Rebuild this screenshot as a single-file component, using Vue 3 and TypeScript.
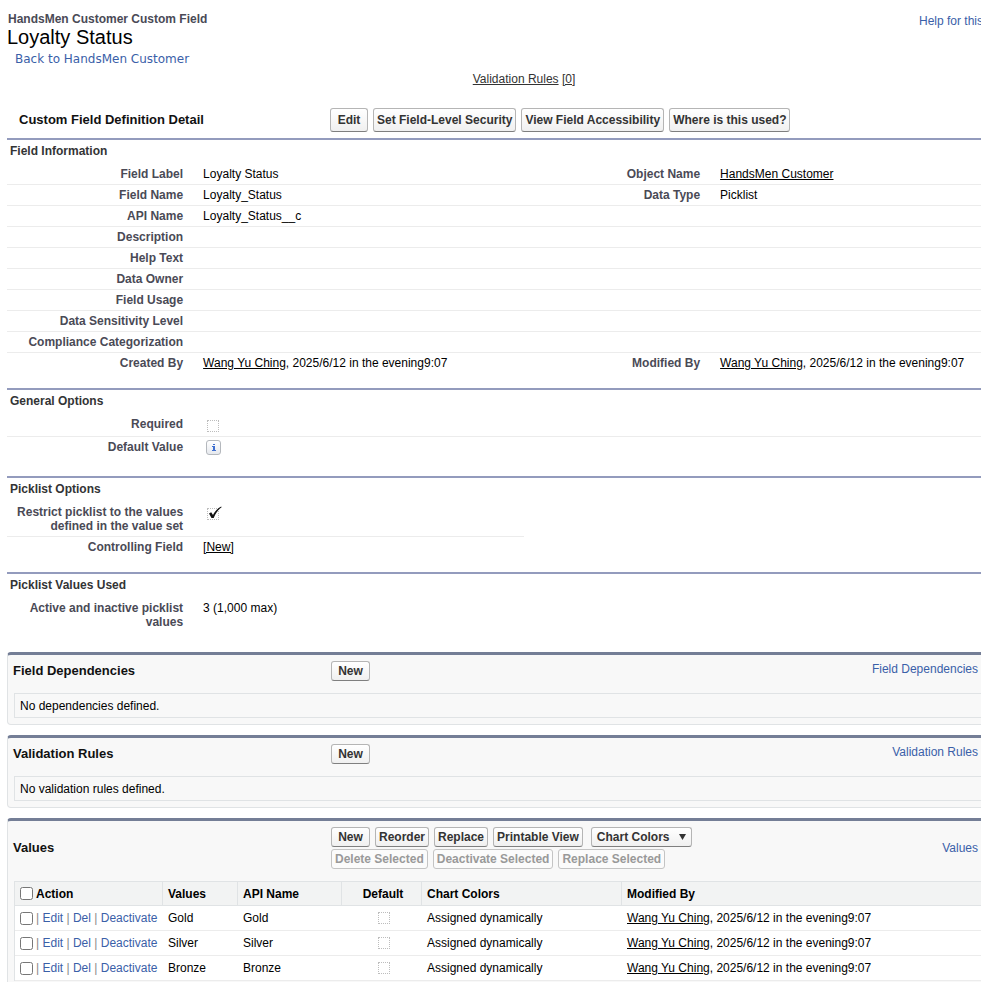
<script setup lang="ts">
import { ref } from 'vue'

interface Field {
  label: string
  text?: string
  link?: string
}

interface FieldRow {
  left: Field
  right?: Field
}

const stamp = ', 2025/6/12 in the evening9:07'
const user = 'Wang Yu Ching'

const information: FieldRow[] = [
  { left: { label: 'Field Label', text: 'Loyalty Status' }, right: { label: 'Object Name', link: 'HandsMen Customer' } },
  { left: { label: 'Field Name', text: 'Loyalty_Status' }, right: { label: 'Data Type', text: 'Picklist' } },
  { left: { label: 'API Name', text: 'Loyalty_Status__c' } },
  { left: { label: 'Description' } },
  { left: { label: 'Help Text' } },
  { left: { label: 'Data Owner' } },
  { left: { label: 'Field Usage' } },
  { left: { label: 'Data Sensitivity Level' } },
  { left: { label: 'Compliance Categorization' } },
  { left: { label: 'Created By', link: user, text: stamp }, right: { label: 'Modified By', link: user, text: stamp } },
]

const detailActions = ['Edit', 'Set Field-Level Security', 'View Field Accessibility', 'Where is this used?']
const valueActions = ['New', 'Reorder', 'Replace', 'Printable View']
const bulkActions = ['Delete Selected', 'Deactivate Selected', 'Replace Selected']

const relatedLists = [
  { title: 'Field Dependencies', empty: 'No dependencies defined.' },
  { title: 'Validation Rules', empty: 'No validation rules defined.' },
]

const values = ['Gold', 'Silver', 'Bronze']
const selected = ref<string[]>([])

function toggleAll(event: Event) {
  selected.value = (event.target as HTMLInputElement).checked ? [...values] : []
}
</script>

<template>
  <div class="page">
    <header class="top">
      <div>
        <p class="eyebrow">HandsMen Customer Custom Field</p>
        <h1>Loyalty Status</h1>
        <a class="back" href="#">Back to HandsMen Customer</a>
      </div>
      <a class="help" href="#">Help for this</a>
    </header>

    <main class="content">
      <nav class="jump"><a href="#">Validation Rules</a> <a href="#">[0]</a></nav>

      <div class="detail-head">
        <h2>Custom Field Definition Detail</h2>
        <div class="buttons">
          <button v-for="name in detailActions" :key="name" type="button" class="btn tall">{{ name }}</button>
        </div>
      </div>

      <section class="block">
        <h3>Field Information</h3>
        <dl v-for="row in information" :key="row.left.label" class="row">
          <template v-for="field in [row.left, row.right]">
            <template v-if="field">
              <dt>{{ field.label }}</dt>
              <dd><a v-if="field.link" href="#">{{ field.link }}</a>{{ field.text }}</dd>
            </template>
          </template>
        </dl>
      </section>

      <section class="block">
        <h3>General Options</h3>
        <div class="row with-icon">
          <label class="name" for="required">Required</label>
          <div class="data"><span class="flag"><input id="required" type="checkbox" disabled /></span></div>
        </div>
        <div class="row with-info">
          <span class="name">Default Value</span>
          <div class="data">
            <button type="button" class="info" aria-label="Default value information">
              <svg width="15" height="15" viewBox="0 0 15 15" aria-hidden="true">
                <path d="M7 4h2v1H7zM6 6h3v5H7V7H6zM6 10h4v1H6z" fill="#3f6fd0" />
              </svg>
            </button>
          </div>
        </div>
      </section>

      <section class="block half">
        <h3>Picklist Options</h3>
        <div class="row">
          <label class="name" for="restrict">Restrict picklist to the values defined in the value set</label>
          <div class="data">
            <span class="flag">
              <input id="restrict" type="checkbox" checked disabled />
              <svg class="tick" width="15" height="14" viewBox="0 0 15 14" aria-hidden="true">
                <path d="M2 7.500 4.200 6.300 6 9C7.600 5.800 10.300 2.600 14.200.5L14.600 1.200C10.900 4 8.500 7.400 6.700 12H4.500Z" fill="#111" />
              </svg>
            </span>
          </div>
        </div>
        <div class="row">
          <span class="name">Controlling Field</span>
          <div class="data"><a href="#">[New]</a></div>
        </div>
      </section>

      <section class="block last">
        <h3>Picklist Values Used</h3>
        <dl class="row">
          <dt>Active and inactive picklist values</dt>
          <dd>3 (1,000 max)</dd>
        </dl>
      </section>

      <section v-for="list in relatedLists" :key="list.title" class="panel">
        <div class="panel-head">
          <h2>{{ list.title }}</h2>
          <div class="buttons"><button type="button" class="btn">New</button></div>
          <a href="#">{{ list.title }}</a>
        </div>
        <p class="empty">{{ list.empty }}</p>
      </section>

      <section class="panel">
        <div class="panel-head stacked">
          <h2>Values</h2>
          <div class="button-rows">
            <div class="buttons">
              <button v-for="name in valueActions" :key="name" type="button" class="btn">{{ name }}</button>
              <button type="button" class="btn menu" aria-haspopup="menu">
                Chart Colors
                <svg width="7" height="6" viewBox="0 0 7 6" aria-hidden="true"><path d="M0 0h7L3.500 6z" fill="#333" /></svg>
              </button>
            </div>
            <div class="buttons">
              <button v-for="name in bulkActions" :key="name" type="button" class="btn" disabled>{{ name }}</button>
            </div>
          </div>
          <a href="#">Values</a>
        </div>
        <table>
          <colgroup>
            <col class="c-action" /><col class="c-value" /><col class="c-api" /><col class="c-default" /><col class="c-chart" /><col />
          </colgroup>
          <thead>
            <tr>
              <th scope="col">
                <label class="pick">
                  <input type="checkbox" :checked="selected.length === values.length" @change="toggleAll" />Action
                </label>
              </th>
              <th scope="col">Values</th>
              <th scope="col">API Name</th>
              <th scope="col" class="mid">Default</th>
              <th scope="col">Chart Colors</th>
              <th scope="col">Modified By</th>
            </tr>
          </thead>
          <tbody>
            <tr v-for="value in values" :key="value">
              <td>
                <div class="pick actions">
                  <input v-model="selected" type="checkbox" :value="value" :aria-label="value" />
                  <span>| <a href="#">Edit</a> | <a href="#">Del</a> | <a href="#">Deactivate</a></span>
                </div>
              </td>
              <td>{{ value }}</td>
              <td>{{ value }}</td>
              <td class="mid"><span class="flag"><input type="checkbox" disabled :aria-label="value + ' default'" /></span></td>
              <td>Assigned dynamically</td>
              <td><a class="user" href="#">{{ user }}</a>{{ stamp }}</td>
            </tr>
          </tbody>
        </table>
      </section>
    </main>
  </div>
</template>

<style>
body {
  margin: 0;
  background: #fff;
}
</style>

<style scoped>
.page {
  box-sizing: border-box;
  padding: 12px 0 0 7px;
  overflow: hidden;
  font: 12px/14px "Liberation Sans", Arial, sans-serif;
  color: #000;
}

h1, h2, h3, p, dl, dd {
  margin: 0;
}

a {
  color: #3a60a8;
  text-decoration: none;
}

.top {
  display: flex;
  justify-content: space-between;
}

.eyebrow {
  padding-left: 1px;
  font-weight: bold;
  color: #4a4a56;
}

h1 {
  font-size: 20px;
  line-height: 22px;
  font-weight: normal;
}

.back {
  display: block;
  padding: 3px 0 0 8px;
  font: 12px/16px "DejaVu Sans", Verdana, sans-serif;
}

.help {
  width: 62px;
  padding-top: 2px;
  white-space: nowrap;
}

/* The detail area is wider than the window and runs past its right edge. */
.content {
  width: calc(100% + 60px);
}

.jump {
  padding: 5px 0 22px;
  text-align: center;
}

.jump a {
  color: #333;
  text-decoration: underline;
}

.detail-head {
  display: grid;
  grid-template-columns: 311px 1fr;
  align-items: center;
  padding: 0 0 6px 12px;
}

h2 {
  font-size: 13px;
  line-height: 16px;
  color: #111;
}

.buttons {
  display: flex;
  gap: 5px;
}

.btn {
  box-sizing: border-box;
  height: 20px;
  min-width: 39px;
  padding: 0 3px;
  border: 1px solid #b5b5b5;
  border-bottom-color: #7f7f7f;
  border-radius: 3px;
  background: linear-gradient(#fff, #f0f0f0);
  font: bold 12px/14px "Liberation Sans", Arial, sans-serif;
  color: #333;
  white-space: nowrap;
}

.btn.tall {
  height: 24px;
  min-width: 38px;
}

.btn:disabled {
  border-color: #c4c4c4;
  background: #fbfbfb;
  color: #999;
}

.btn.menu {
  display: flex;
  align-items: center;
  gap: 9px;
  margin-left: 3px;
  padding: 0 5px;
}

.block {
  padding-bottom: 14px;
  border-top: 2px solid #939bbd;
}

.block.last {
  padding-bottom: 19px;
}

h3 {
  padding: 4px 3px 6px;
  font-size: 12px;
  line-height: 14px;
  color: #333435;
}

.row {
  display: grid;
  grid-template-columns: 18% 32% 18% 32%;
  min-height: 20px;
  border-bottom: 1px solid #ececec;
}

.row:last-child {
  border-bottom-color: transparent;
}

.half .row {
  width: 50%;
  grid-template-columns: 36% 64%;
}

dt, .name {
  padding: 3px 10px 3px 2px;
  text-align: right;
  font-weight: bold;
  color: #4a4a56;
}

dd, .data {
  padding: 3px 10px;
}

.row a, .user {
  color: #000;
  text-decoration: underline;
}

.with-icon {
  min-height: 22px;
}

.with-info {
  min-height: 24px;
}

.flag {
  position: relative;
  display: inline-block;
  width: 12px;
  height: 12px;
  margin: 3px 4px 0;
  vertical-align: top;
}

.flag input {
  display: block;
  appearance: none;
  box-sizing: border-box;
  width: 12px;
  height: 12px;
  margin: 0;
  border: 1px dotted #bdbdbd;
}

.tick {
  position: absolute;
  left: 0;
  top: -2px;
}

.info {
  display: block;
  box-sizing: border-box;
  width: 15px;
  height: 15px;
  margin-left: 3px;
  padding: 0;
  border: 1px solid #b4b8bd;
  border-radius: 3px;
  background: linear-gradient(#fff, #e6e9ee);
}

.info svg {
  display: block;
  margin: -1px;
}

.panel {
  margin-bottom: 10px;
  border: 1px solid #e0e3e5;
  border-top: 3px solid #747e96;
  border-radius: 4px;
  background: #f8f8f8;
}

.panel-head {
  display: grid;
  grid-template-columns: 318px 1fr auto;
  padding: 6px 62px 12px 5px;
}

.panel-head h2 {
  padding-top: 2px;
}

.panel-head > a {
  padding-top: 1px;
}

.panel-head.stacked {
  align-items: center;
}

.panel-head.stacked > h2,
.panel-head.stacked > a {
  padding-top: 0;
}

.button-rows {
  display: grid;
  gap: 2px;
}

.empty {
  margin: 0 6px 6px;
  padding: 6px 5px 4px;
  border: 1px solid #e0e3e5;
  line-height: 13px;
}

table {
  width: calc(100% - 12px);
  margin: 0 6px 6px;
  table-layout: fixed;
  border-collapse: separate;
  border-spacing: 0;
  border: 1px solid #e0e3e5;
  border-bottom: 0;
}

.c-action { width: 148px; }
.c-value { width: 75px; }
.c-api { width: 104px; }
.c-default { width: 80px; }
.c-chart { width: 200px; }

th, td {
  box-sizing: border-box;
  height: 25px;
  padding: 0 5px;
  border-bottom: 1px solid #ececec;
  background: #fff;
  text-align: left;
  white-space: nowrap;
}

th {
  height: 24px;
  border-right: 1px solid #e0e3e5;
  border-bottom-color: #e0e3e5;
  background: #f2f3f3;
}

.mid {
  padding-left: 8px;
  text-align: center;
}

.mid .flag {
  margin-top: 1px;
}

.pick {
  display: flex;
  align-items: center;
  gap: 3px;
}

.pick input {
  width: 13px;
  height: 13px;
  margin: 0;
}

.actions {
  color: #888;
}
</style>
